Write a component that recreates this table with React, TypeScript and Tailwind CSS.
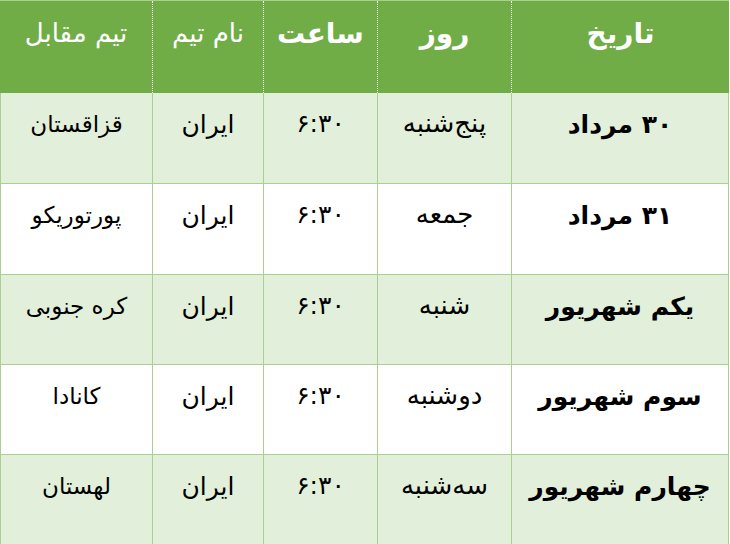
import React from "react";

const rows = [
  { date: "۳۰ مرداد", day: "پنج‌شنبه", time: "۶:۳۰", team: "ایران", rival: "قزاقستان" },
  { date: "۳۱ مرداد", day: "جمعه", time: "۶:۳۰", team: "ایران", rival: "پورتوریکو" },
  { date: "یکم شهریور", day: "شنبه", time: "۶:۳۰", team: "ایران", rival: "کره جنوبی" },
  { date: "سوم شهریور", day: "دوشنبه", time: "۶:۳۰", team: "ایران", rival: "کانادا" },
  { date: "چهارم شهریور", day: "سه‌شنبه", time: "۶:۳۰", team: "ایران", rival: "لهستان" },
];

const font = { fontFamily: '"DejaVu Sans", "Noto Sans", sans-serif' };

export default function App() {
  return (
    <div className="w-[730px] h-[544px] bg-white overflow-hidden" style={font}>
      <div dir="rtl" className="w-[729px] grid grid-cols-[218px_134px_114px_111px_152px] grid-rows-[92px_91px_91px_90px_90px_90px] border-t border-[#a9d08e]">
        <div className="bg-[#70ad47] text-white font-bold text-[28px] text-center pt-[12px] border-l border-dotted border-white">تاریخ</div>
        <div className="bg-[#70ad47] text-white font-bold text-[28px] text-center pt-[12px] border-l border-dotted border-white">روز</div>
        <div className="bg-[#70ad47] text-white font-bold text-[28px] text-center pt-[12px] border-l border-dotted border-white">ساعت</div>
        <div className="bg-[#70ad47] text-white text-[26px] text-center pt-[13px] border-l border-dotted border-white">نام تیم</div>
        <div className="bg-[#70ad47] text-white text-[26px] text-center pt-[13px]">تیم مقابل</div>
        {rows.map((r, i) => {
          const bg = i % 2 === 0 ? "bg-[#e2efda]" : "bg-white";
          const cell = `${bg} text-black text-center border-b border-l border-[#a9d08e]`;
          return (
            <React.Fragment key={i}>
              <div className={`${cell} border-r font-bold text-[25px] pt-[13px]`}>{r.date}</div>
              <div className={`${cell} text-[26px] pt-[11px]`}>{r.day}</div>
              <div className={`${cell} text-[25px] pt-[12px]`}>{r.time}</div>
              <div className={`${cell} text-[25px] pt-[13px]`}>{r.team}</div>
              <div className={`${cell} text-[23px] pt-[14px]`}>{r.rival}</div>
            </React.Fragment>
          );
        })}
      </div>
    </div>
  );
}
